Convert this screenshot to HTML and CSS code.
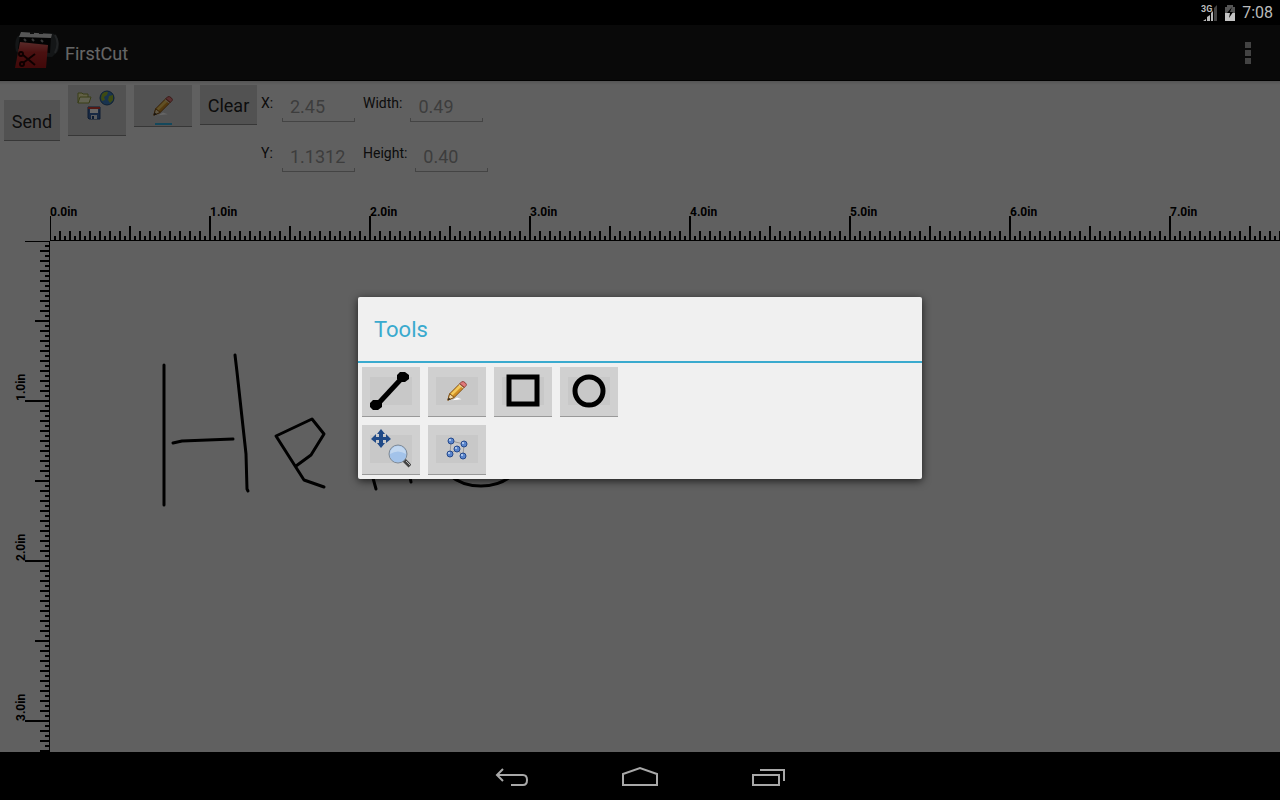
FILE: index.html
```html
<!DOCTYPE html>
<html lang="en">
<head>
    <meta charset="UTF-8">
    <meta name="viewport" content="width=device-width, initial-scale=1.0">
    <title>FirstCut</title>
    <link rel="stylesheet" href="styles.css">
</head>
<body>

    <!-- Shared icons -->
    <svg class="defs" width="0" height="0" aria-hidden="true">
        <symbol id="pencil" viewBox="0 0 24 24">
            <path d="M7 22 L17 21 L12 19 Z" fill="#fff"/>
            <path d="M2 22 L4 15 L15 4 L20 8 L9 19 Z" fill="#d08f24" stroke="#7d4d12"/>
            <path d="M5 15 L15 5 L17 7 L7 17 Z" fill="#f3c95c"/>
            <path d="M15 4 L17 2 Q19 1 21 3 Q23 5 22 6 L20 8 Z" fill="#e0797a" stroke="#8a3b34"/>
            <path d="M14 5 L19 9" stroke="#d8d4c8" stroke-width="1"/>
            <path d="M2 22 L4 15 L9 19 Z" fill="#f0d9a8" stroke="#7d4d12"/>
            <path d="M2 22 L3 19 L5 21 Z" fill="#222"/>
        </symbol>
    </svg>

    <div class="status-bar">
        <svg width="17" height="18" viewBox="0 0 17 18" role="img" aria-label="3G signal">
            <text x="0" y="8" class="signal-text">3G</text>
            <path d="M2 17 L5 15 V17 Z M6 17 V13 L9 11 V17 Z M10 17 V9 L12 7 V17 Z" fill="#bbb"/>
            <path d="M13 17 V4 L16 1 V17 Z" fill="#444"/>
        </svg>
        <svg width="12" height="18" viewBox="0 0 12 18" role="img" aria-label="Battery charging">
            <path d="M1 3 H3 V1 H9 V3 H11 V9 H1 Z" fill="#555"/>
            <path d="M1 9 H11 V17 H1 Z" fill="#c4c4c4"/>
            <path d="M8 3 L3 9 H6 L5 14 L9 8 H6 Z" fill="#000"/>
        </svg>
        <span class="clock">7:08</span>
    </div>

    <div class="app">
        <header class="app-bar">
            <svg width="45" height="44" viewBox="0 0 45 44" aria-hidden="true">
                <defs>
                    <linearGradient id="sheet" x1="0" y1="0" x2="0" y2="1">
                        <stop offset="0" stop-color="#e06a66"/>
                        <stop offset="0.4" stop-color="#b92a2a"/>
                        <stop offset="1" stop-color="#a31618"/>
                    </linearGradient>
                </defs>
                <path d="M4 5 Q0 10 2 20 L6 24 L38 26 L44 20 Q47 8 40 3 L36 2 Z" fill="#33383b"/>
                <path d="M41 4 Q46 12 41 22" fill="none" stroke="#555a5d" stroke-width="2"/>
                <path d="M6 4 L37 6 L36 22 L4 18 Z" fill="#080808"/>
                <path d="M7 1 L38 3 L37 7 L5 6 Z" fill="#d8d8d8"/>
                <path d="M16 1 H20 V3 H16 Z M25 1 H29 V3 H25 Z" fill="#222"/>
                <path d="M10 8 L12 10 M18 8 L20 10 M27 9 L29 11" stroke="#888" stroke-width="2"/>
                <path d="M6 11 L34 14 L32 37 L1 37 Z" fill="url(#sheet)"/>
                <g fill="none" stroke="#200" stroke-width="2">
                    <path d="M9 24 L21 34 M9 32 L21 23"/>
                    <circle cx="7" cy="23" r="2"/>
                    <circle cx="8" cy="33" r="2"/>
                </g>
            </svg>
            <h1 class="app-title">FirstCut</h1>
            <button class="overflow" aria-label="More options">
                <svg width="6" height="22" viewBox="0 0 6 22"><path d="M0 0H6V6H0Z M0 8H6V14H0Z M0 16H6V22H0Z" fill="#a8a8a8"/></svg>
            </button>
        </header>

        <div class="toolbar">
            <button class="btn send">Send</button>
            <button class="btn file-btn" aria-label="File">
                <svg width="42" height="32" viewBox="0 0 42 32">
                    <path d="M2 13 V3 H6 L7 4 H12 V7" fill="#f5efb0" stroke="#8d9a3a"/>
                    <path d="M2 13 L4 7 H15 L13 13 Z" fill="#f3f3c8" stroke="#8d9a3a"/>
                    <circle cx="31" cy="8" r="7" fill="#3c7fc4" stroke="#24507e"/>
                    <path d="M26 4 Q29 1 32 2 L31 5 L28 7 L29 10 L26 11 L25 8 Z M33 6 L37 5 V10 L34 13 L32 10 Z" fill="#9ab82f"/>
                    <path d="M12 17 H24 V29 H13 L12 28 Z" fill="#3c68a8" stroke="#22457c"/>
                    <path d="M14 17 H22 V23 H14 Z" fill="#fff"/>
                    <path d="M12 17 H24 V19 H12 Z" fill="#d33c34"/>
                    <path d="M15 25 H21 V29 H15 Z" fill="#dfe3ea"/>
                    <path d="M16 26 H18 V29 H16 Z" fill="#22457c"/>
                </svg>
            </button>
            <button class="btn pen-btn" aria-label="Pencil">
                <svg width="22" height="22"><use href="#pencil"/></svg>
                <span class="pen-color"></span>
            </button>
            <button class="btn clear">Clear</button>
            <div class="fields">
                <div class="field-row">
                    <label for="x">X:</label>
                    <input type="text" id="x" value="2.45">
                    <label for="width">Width:</label>
                    <input type="text" id="width" value="0.49">
                </div>
                <div class="field-row">
                    <label for="y">Y:</label>
                    <input type="text" id="y" value="1.1312">
                    <label for="height">Height:</label>
                    <input type="text" id="height" value="0.40">
                </div>
            </div>
        </div>

        <div class="workspace">
            <div class="corner"></div>
            <!-- 160px to the inch, ticks every 1/32in -->
            <svg class="ruler-top" width="100%" height="41">
                <defs>
                    <pattern id="inch-x" width="160" height="41" x="-1" patternUnits="userSpaceOnUse">
                        <path d="M0 16H2V41H0Z M80 26H82V41H80Z"/>
                    </pattern>
                    <pattern id="tick-x" width="10" height="41" x="-1" patternUnits="userSpaceOnUse">
                        <path d="M0 31H2V41H0Z M5 36H7V41H5Z"/>
                    </pattern>
                </defs>
                <rect width="100%" height="41" fill="url(#tick-x)"/>
                <rect width="100%" height="41" fill="url(#inch-x)"/>
                <rect y="40" width="100%" height="1"/>
                <text x="0" y="16">0.0in</text>
                <text x="160" y="16">1.0in</text>
                <text x="320" y="16">2.0in</text>
                <text x="480" y="16">3.0in</text>
                <text x="640" y="16">4.0in</text>
                <text x="800" y="16">5.0in</text>
                <text x="960" y="16">6.0in</text>
                <text x="1120" y="16">7.0in</text>
            </svg>
            <svg class="ruler-left" width="50" height="100%">
                <defs>
                    <pattern id="inch-y" width="50" height="160" y="-1" patternUnits="userSpaceOnUse">
                        <path d="M25 0V2H50V0Z M35 80V82H50V80Z"/>
                    </pattern>
                    <pattern id="tick-y" width="50" height="10" y="-1" patternUnits="userSpaceOnUse">
                        <path d="M40 0V2H50V0Z M45 5V7H50V5Z"/>
                    </pattern>
                </defs>
                <rect width="50" height="100%" fill="url(#tick-y)"/>
                <rect width="50" height="100%" fill="url(#inch-y)"/>
                <rect x="49" width="1" height="100%"/>
                <text transform="translate(25 160) rotate(-90)">1.0in</text>
                <text transform="translate(25 320) rotate(-90)">2.0in</text>
                <text transform="translate(25 480) rotate(-90)">3.0in</text>
            </svg>
            <svg class="drawing" width="100%" height="100%" role="img" aria-label="Drawing">
                <path d="M114 124 V264"/>
                <path d="M123 202 L132 200 L183 198"/>
                <path d="M185 114 L187 131 L196 213 L197 248 L198 250"/>
                <path d="M246 225 L261 214 L274 193 L262 178 L226 195 L254 239 L274 246"/>
                <path d="M310 110 L323 237 L326 248"/>
                <path d="M350 110 L360 236 L361 241"/>
                <ellipse cx="431" cy="205" rx="46" ry="40"/>
            </svg>
        </div>

        <div class="scrim">
            <div class="dialog" role="dialog" aria-labelledby="dialog-title">
                <h2 id="dialog-title">Tools</h2>
                <div class="tools">
                    <button class="tool" aria-label="Line">
                        <svg width="42" height="40" viewBox="0 0 42 40">
                            <path d="M6 35 L32 7" stroke="#000" stroke-width="5"/>
                            <path d="M3 29 H9 L12 32 V36 L8 39 H3 L0 36 V32 Z M30 1 H35 L39 4 V8 L35 11 H30 L27 8 V4 Z"/>
                        </svg>
                    </button>
                    <button class="tool" aria-label="Freehand">
                        <svg width="22" height="22"><use href="#pencil"/></svg>
                    </button>
                    <button class="tool" aria-label="Rectangle">
                        <svg width="34" height="34" viewBox="0 0 34 34"><path d="M3 3 H31 V30 H3 Z" fill="none" stroke="#000" stroke-width="5"/></svg>
                    </button>
                    <button class="tool" aria-label="Circle">
                        <svg width="34" height="34" viewBox="0 0 34 34"><circle cx="17" cy="17" r="14" fill="none" stroke="#000" stroke-width="5"/></svg>
                    </button>
                    <button class="tool" aria-label="Pan and zoom">
                        <svg width="40" height="40" viewBox="0 0 40 40">
                            <path d="M10 0 L14 5 H12 V8 H15 V5 L20 10 L15 14 V11 H12 V14 H14 L10 19 L6 14 H8 V11 H5 V14 L0 10 L5 5 V8 H8 V5 H6 Z" fill="#204a87"/>
                            <path d="M33 31 L39 37" stroke="#444" stroke-width="4"/>
                            <path d="M35 32 L39 36" stroke="#bbb" stroke-width="1"/>
                            <circle cx="27" cy="25" r="9" fill="#a3c3ea" stroke="#7f8a96"/>
                            <path d="M19 25 A8 8 0 0 1 35 25 Q27 20 19 25 Z" fill="#c3d8f0"/>
                        </svg>
                    </button>
                    <button class="tool" aria-label="Edit points">
                        <svg width="22" height="24" viewBox="0 0 22 24">
                            <path d="M5 4 L18 7 L17 19 L11 12 L4 17 Z" fill="none" stroke="#999"/>
                            <g fill="#5b86cd" stroke="#25498c">
                                <circle cx="5" cy="4" r="3"/>
                                <circle cx="18" cy="7" r="3"/>
                                <circle cx="11" cy="12" r="3"/>
                                <circle cx="4" cy="17" r="3"/>
                                <circle cx="17" cy="19" r="3"/>
                            </g>
                            <g fill="#c5d8f5">
                                <circle cx="4" cy="3" r="1"/>
                                <circle cx="17" cy="6" r="1"/>
                                <circle cx="10" cy="11" r="1"/>
                                <circle cx="3" cy="16" r="1"/>
                                <circle cx="16" cy="18" r="1"/>
                            </g>
                        </svg>
                    </button>
                </div>
            </div>
        </div>
    </div>

    <nav class="nav-bar">
        <button aria-label="Back">
            <svg width="34" height="20" viewBox="0 0 34 20"><path d="M8 3 L2 9 L8 15 M2 9 H28 Q32 9 32 14 Q32 19 28 19 H16"/></svg>
        </button>
        <button aria-label="Home">
            <svg width="36" height="20" viewBox="0 0 36 20"><path d="M1 19 V8 L18 2 L35 8 V19 Z"/></svg>
        </button>
        <button aria-label="Recent apps">
            <svg width="34" height="20" viewBox="0 0 34 20"><path d="M2 9 H28 V19 H2 Z M9 4 H33 V15"/></svg>
        </button>
    </nav>

</body>
</html>
```
FILE: styles.css
```css
* {
    box-sizing: border-box;
}
body {
    margin: 0;
    height: 100vh;
    display: flex;
    flex-direction: column;
    background-color: #000;
    font-family: Roboto, sans-serif;
    overflow: hidden;
}
button {
    border: 0;
    padding: 0;
    background: none;
    font-family: inherit;
}
svg {
    display: block;
}
.defs {
    position: absolute;
}

/* System bars */
.status-bar {
    height: 25px;
    display: flex;
    align-items: center;
    justify-content: flex-end;
    gap: 6px;
    padding-right: 7px;
    color: #bbb;
}
.signal-text {
    font-size: 9px;
    font-weight: bold;
    fill: #bbb;
}
.clock {
    font-size: 16px;
}
.nav-bar {
    height: 48px;
    display: flex;
    justify-content: center;
}
.nav-bar button {
    width: 128px;
    display: flex;
    align-items: center;
    justify-content: center;
}
.nav-bar path {
    fill: none;
    stroke: #a8a8a8;
    stroke-width: 2;
}

/* App */
.app {
    flex: 1;
    min-height: 0;
    position: relative;
    display: flex;
    flex-direction: column;
    background-color: #f1f1f1;
}
.app-bar {
    height: 56px;
    display: flex;
    align-items: center;
    gap: 6px;
    padding: 0 14px;
    background-color: #181818;
    border-bottom: 1px solid #000;
}
.app-bar svg {
    flex: none;
}
.app-title {
    flex: 1;
    margin: 0;
    padding-top: 2px;
    font-size: 18px;
    font-weight: normal;
    color: #fff;
}
.overflow {
    width: 36px;
    height: 48px;
    display: flex;
    align-items: center;
    justify-content: center;
}
.toolbar {
    height: 119px;
    display: flex;
    align-items: flex-start;
    gap: 8px;
    padding: 4px;
    background: linear-gradient(#d4d4d4, #f1f1f1 4px);
}
.btn {
    height: 40px;
    display: flex;
    flex-direction: column;
    align-items: center;
    justify-content: center;
    padding-top: 2px;
    background-color: #cecece;
    border-bottom: 1px solid #8a8a8a;
    font-size: 18px;
    color: #222;
}
.send {
    width: 56px;
    height: 41px;
    margin-top: 15px;
}
.clear {
    width: 57px;
}
.file-btn {
    width: 58px;
    height: 51px;
    justify-content: flex-start;
    padding-top: 5px;
}
.pen-btn {
    width: 58px;
    height: 42px;
    justify-content: flex-end;
    gap: 6px;
    padding-bottom: 1px;
}
.pen-color {
    width: 17px;
    height: 2px;
    background-color: #33b5e5;
}
.fields {
    display: flex;
    flex-direction: column;
    margin-left: -4px;
}
.field-row {
    height: 50px;
    display: flex;
    align-items: flex-start;
    gap: 8px;
}
.field-row label {
    min-width: 13px;
    padding-top: 10px;
    font-size: 14px;
    line-height: 16px;
    color: #222;
}
.field-row input {
    width: 73px;
    height: 37px;
    padding: 7px 8px 0;
    border: 0;
    border-bottom: 1px solid #aaa;
    background: linear-gradient(#aaa, #aaa) left bottom / 1px 3px no-repeat,
                linear-gradient(#aaa, #aaa) right bottom / 1px 3px no-repeat;
    font-family: inherit;
    font-size: 18px;
    color: #999;
}

/* Rulers and drawing area */
.workspace {
    flex: 1;
    min-height: 0;
    display: grid;
    grid-template-columns: 50px minmax(0, 1fr);
    grid-template-rows: 41px minmax(0, 1fr);
}
.workspace text {
    font-size: 12px;
    font-weight: bold;
}
.ruler-top {
    overflow: hidden;
}
.drawing {
    fill: none;
    stroke: #000;
    stroke-width: 3;
    stroke-linecap: round;
    stroke-linejoin: round;
}

/* Dialog */
.scrim {
    position: absolute;
    inset: 0;
    display: flex;
    align-items: center;
    justify-content: center;
    padding-bottom: 2px;
    background-color: rgba(0, 0, 0, 0.6);
}
.dialog {
    width: 564px;
    max-width: 90%;
    background-color: #f0f0f0;
    border-radius: 2px;
    box-shadow: 0 2px 8px rgba(0, 0, 0, 0.7);
}
.dialog h2 {
    margin: 0;
    padding: 2px 16px 0;
    line-height: 62px;
    border-bottom: 2px solid #3aaace;
    font-size: 22px;
    font-weight: normal;
    color: #3aaace;
}
.tools {
    display: grid;
    grid-template-columns: repeat(4, 58px);
    gap: 8px;
    padding: 4px;
}
.tool {
    height: 50px;
    display: flex;
    align-items: center;
    justify-content: center;
    border-bottom: 1px solid #999;
    background: linear-gradient(#c8c8c8, #c8c8c8) center / 42px 28px no-repeat #d0d0d0;
}
```
